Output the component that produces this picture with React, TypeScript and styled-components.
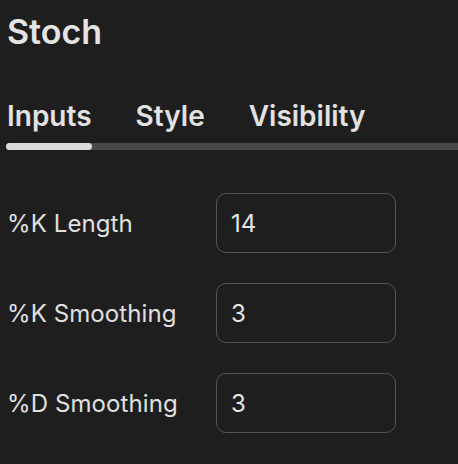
import React from "react";
import styled, { createGlobalStyle } from "styled-components";

const Global = createGlobalStyle`
  html, body { margin: 0; padding: 0; background: #1e1e1e; }
  body { font-family: Inter, "Noto Sans", sans-serif; color: #e2e2e2; overflow: hidden; }
`;

const Page = styled.div`
  width: 458px;
  height: 464px;
  background: #1e1e1e;
  overflow: hidden;
`;

const Title = styled.h1`
  margin: 0;
  padding: 12px 0 0 7px;
  font-size: 34px;
  font-weight: 600;
  line-height: 40px;
  color: #e4e4e4;
`;

const TabRow = styled.div`
  display: flex;
  gap: 44px;
  padding: 48px 0 0 7px;
`;

const Tab = styled.div`
  font-size: 28px;
  font-weight: 600;
  line-height: 32px;
  color: #e2e2e2;
`;

const Track = styled.div`
  margin: 11px 0 0 6px;
  height: 7px;
  width: 470px;
  border-radius: 4px;
  background: #4a4a4a;
  display: flex;
`;

const Indicator = styled.div<{ $w: number }>`
  width: ${(p) => p.$w}px;
  height: 100%;
  border-radius: 4px;
  background: #dadada;
`;

const Form = styled.div`
  display: flex;
  flex-direction: column;
  gap: 30px;
  padding: 43px 0 0 7px;
`;

const Row = styled.div`
  display: grid;
  grid-template-columns: 209px 180px;
  align-items: center;
`;

const Label = styled.div`
  font-size: 24px;
  font-weight: 400;
  letter-spacing: 0.1px;
  color: #e0e0e0;
`;

const Field = styled.div`
  box-sizing: border-box;
  height: 60px;
  border: 1px solid #555;
  border-radius: 10px;
  display: flex;
  align-items: center;
  padding-left: 14px;
  font-size: 24px;
  color: #e4e4e4;
`;

const rows = [
  { label: "%K Length", value: "14" },
  { label: "%K Smoothing", value: "3" },
  { label: "%D Smoothing", value: "3" },
];

export default function App() {
  return (
    <Page>
      <Global />
      <Title>Stoch</Title>
      <TabRow>
        <Tab>Inputs</Tab>
        <Tab>Style</Tab>
        <Tab>Visibility</Tab>
      </TabRow>
      <Track>
        <Indicator $w={86} />
      </Track>
      <Form>
        {rows.map((r) => (
          <Row key={r.label}>
            <Label>{r.label}</Label>
            <Field>{r.value}</Field>
          </Row>
        ))}
      </Form>
    </Page>
  );
}
